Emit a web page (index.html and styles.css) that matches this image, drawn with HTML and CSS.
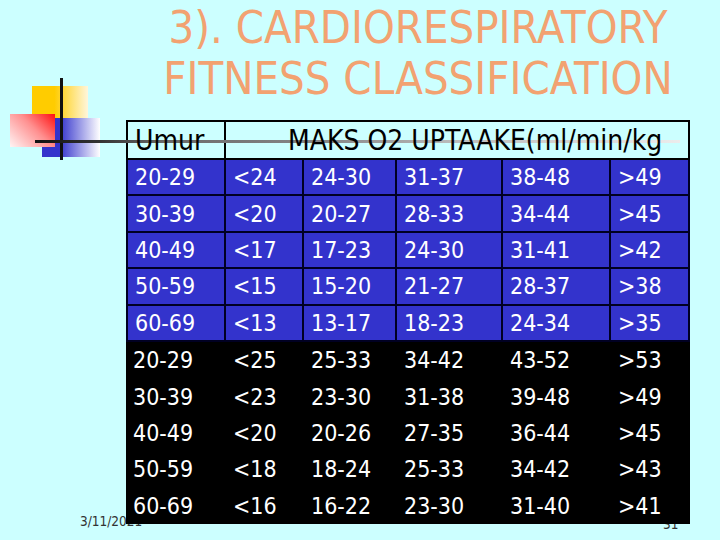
FILE: index.html
```html
<!DOCTYPE html>
<html>
<head>
<meta charset="utf-8">
<link rel="stylesheet" href="styles.css">
</head>
<body>
<div class="slide">
  <div class="logo">
    <div class="sq yellow"></div>
    <div class="sq blue"></div>
    <div class="sq red"></div>
    <div class="vline"></div>
  </div>
  <div class="hline"></div>
  <h1 class="title">3). CARDIORESPIRATORY<br>FITNESS CLASSIFICATION</h1>
  <div class="grid">
    <div class="hd first"><span class="ht">Umur</span></div>
    <div class="hd span"><span class="ht">MAKS O2 UPTAAKE(ml/min/kg</span></div>

    <div class="c b first">20-29</div><div class="c b">&lt;24</div><div class="c b">24-30</div><div class="c b">31-37</div><div class="c b">38-48</div><div class="c b">&gt;49</div>
    <div class="c b first">30-39</div><div class="c b">&lt;20</div><div class="c b">20-27</div><div class="c b">28-33</div><div class="c b">34-44</div><div class="c b">&gt;45</div>
    <div class="c b first">40-49</div><div class="c b">&lt;17</div><div class="c b">17-23</div><div class="c b">24-30</div><div class="c b">31-41</div><div class="c b">&gt;42</div>
    <div class="c b first">50-59</div><div class="c b">&lt;15</div><div class="c b">15-20</div><div class="c b">21-27</div><div class="c b">28-37</div><div class="c b">&gt;38</div>
    <div class="c b first">60-69</div><div class="c b">&lt;13</div><div class="c b">13-17</div><div class="c b">18-23</div><div class="c b">24-34</div><div class="c b">&gt;35</div>

    <div class="c k">20-29</div><div class="c k">&lt;25</div><div class="c k">25-33</div><div class="c k">34-42</div><div class="c k">43-52</div><div class="c k">&gt;53</div>
    <div class="c k">30-39</div><div class="c k">&lt;23</div><div class="c k">23-30</div><div class="c k">31-38</div><div class="c k">39-48</div><div class="c k">&gt;49</div>
    <div class="c k">40-49</div><div class="c k">&lt;20</div><div class="c k">20-26</div><div class="c k">27-35</div><div class="c k">36-44</div><div class="c k">&gt;45</div>
    <div class="c k">50-59</div><div class="c k">&lt;18</div><div class="c k">18-24</div><div class="c k">25-33</div><div class="c k">34-42</div><div class="c k">&gt;43</div>
    <div class="c k">60-69</div><div class="c k">&lt;16</div><div class="c k">16-22</div><div class="c k">23-30</div><div class="c k">31-40</div><div class="c k">&gt;41</div>
  </div>
  <div class="date">3/11/2021</div>
  <div class="pnum">31</div>
</div>
</body>
</html>
```
FILE: styles.css
```css
html, body {
  margin: 0;
  padding: 0;
  background: #ccffff;
}
.slide {
  position: relative;
  z-index: 0;
  width: 720px;
  height: 540px;
  overflow: hidden;
  background: #ccffff;
  font-family: "DejaVu Sans Condensed", "DejaVu Sans", sans-serif;
  font-stretch: condensed;
}
.title {
  margin: 2px 0 0 116px;
  font-size: 45px;
  font-weight: normal;
  line-height: 51px;
  text-align: center;
  color: #f2a271;
  white-space: nowrap;
}
.logo {
  position: absolute;
  left: 0;
  top: 0;
  width: 110px;
  height: 170px;
  z-index: 1;
}
.sq { position: absolute; }
.yellow {
  left: 32px; top: 86px; width: 56px; height: 40px;
  background: linear-gradient(to right, #ffcc00 0%, #ffcc00 40%, #fff6dc 100%);
}
.blue {
  left: 42px; top: 118px; width: 58px; height: 39px;
  background: linear-gradient(to right, #3333cc 0%, #3333cc 30%, #ffffff 100%);
}
.red {
  left: 10px; top: 114px; width: 45px; height: 33px;
  background: linear-gradient(225deg, #ff1010 0%, #ff9090 45%, #fff4f4 100%);
}
.vline {
  position: absolute;
  left: 60px; top: 78px; width: 3px; height: 82px;
  background: #111;
}
.hline {
  position: absolute;
  left: 35px; top: 140px; width: 645px; height: 3px;
  background: linear-gradient(to right, #111 0%, #333 10%, #6a6a6a 20%, #888 45%, #bbb 65%, #ececec 100%);
  z-index: 2;
}
.grid {
  margin: 16px 0 0 126px;
  width: 564px;
  display: grid;
  grid-template-columns: 100px 78px 93px 106px 108px 79px;
  grid-template-rows: 40px repeat(10, 36.4px);
}
.hd {
  box-sizing: border-box;
  display: flex;
  align-items: center;
  font-size: 28px;
  color: #000;
  background: #ccffff;
  border-top: 2px solid #000;
  border-right: 2px solid #000;
  border-bottom: 2px solid #000;
  padding-left: 7px;
  white-space: nowrap;
}
.hd.first { border-left: 2px solid #000; }
.hd.span {
  grid-column: span 5;
  padding-left: 62px;
}
.ht {
  position: relative;
  z-index: 3;
}
.c {
  position: relative;
  z-index: 2;
  box-sizing: border-box;
  display: flex;
  align-items: center;
  padding-left: 7px;
  font-size: 23px;
  color: #fff;
  white-space: nowrap;
}
.b {
  background: #3333cc;
  border-right: 2px solid #000022;
  border-bottom: 2px solid #000022;
}
.b.first { border-left: 2px solid #000022; }
.k {
  background: #000;
}
.date {
  position: absolute;
  left: 80px;
  top: 513px;
  font-size: 13.5px;
  color: #333;
  z-index: 1;
}
.pnum {
  position: absolute;
  left: 663px;
  top: 516px;
  font-size: 13.5px;
  color: #333;
  z-index: 1;
}
```
